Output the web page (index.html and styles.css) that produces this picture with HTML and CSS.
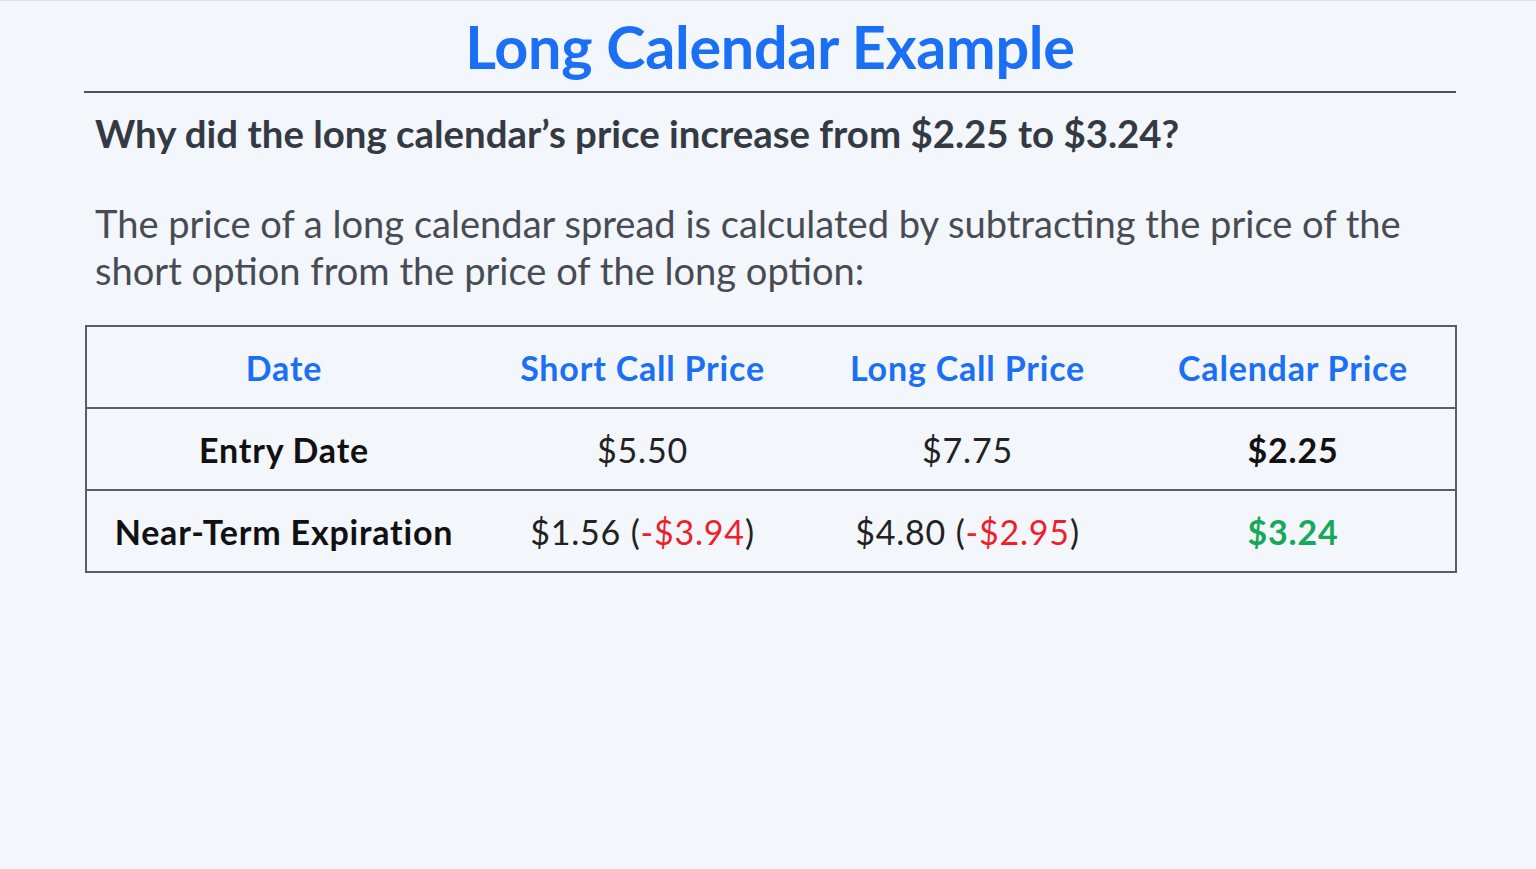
FILE: index.html
```html
<!DOCTYPE html>
<html lang="en">
<head>
<meta charset="utf-8">
<title>Long Calendar Example</title>
<link rel="stylesheet" href="styles.css">
</head>
<body>
<main class="slide">
  <h1 class="title">Long Calendar Example</h1>
  <hr class="rule">
  <h2 class="question">Why did the long calendar’s price increase from $2.25 to $3.24?</h2>
  <p class="body">The price of a long calendar spread is calculated by subtracting the price of the short option from the price of the long option:</p>
  <table class="prices">
    <colgroup>
      <col class="c1"><col class="c2"><col class="c3"><col class="c4">
    </colgroup>
    <thead>
      <tr>
        <th>Date</th>
        <th>Short Call Price</th>
        <th>Long Call Price</th>
        <th>Calendar Price</th>
      </tr>
    </thead>
    <tbody>
      <tr>
        <td class="label">Entry Date</td>
        <td>$5.50</td>
        <td>$7.75</td>
        <td class="strong">$2.25</td>
      </tr>
      <tr>
        <td class="label">Near-Term Expiration</td>
        <td>$1.56 (<span class="neg">-$3.94</span>)</td>
        <td>$4.80 (<span class="neg">-$2.95</span>)</td>
        <td class="strong pos">$3.24</td>
      </tr>
    </tbody>
  </table>
</main>
</body>
</html>
```

FILE: styles.css
```css
html, body {
  margin: 0;
  padding: 0;
  background: #f3f6fb;
}
body {
  width: 1536px;
  height: 869px;
  overflow: hidden;
  border-top: 1px solid #dfe3ea;
  box-sizing: border-box;
}
.slide {
  padding: 0 80px 0 84px;
  font-family: Lato, "Open Sans", sans-serif;
}
.title {
  margin: 0;
  padding-top: 12px;
  height: 78px;
  box-sizing: border-box;
  text-align: center;
  font-size: 59.3px;
  line-height: 66px;
  font-weight: 700;
  color: #1a6ff4;
  letter-spacing: -0.3px;
}
.rule {
  margin: 12px 0 0 0;
  border: 0;
  height: 2px;
  background: #4d5158;
}
.question {
  margin: 17px 0 0 11px;
  font-size: 38.4px;
  line-height: 46px;
  font-weight: 700;
  color: #343a44;
}
.body {
  margin: 44px 0 0 11px;
  font-size: 38.1px;
  line-height: 47px;
  font-weight: 400;
  color: #474c54;
  width: 1360px;
}
.prices {
  margin: 31px 0 0 1px;
  width: 1370px;
  border-collapse: collapse;
  border: 2px solid #5a5d63;
  table-layout: fixed;
  font-family: Lato, "Open Sans", sans-serif;
}
.c1 { width: 395px; }
.c2 { width: 323px; }
.c3 { width: 327px; }
.c4 { width: 325px; }
.prices th,
.prices td {
  height: 80px;
  padding: 0;
  text-align: center;
  vertical-align: middle;
  font-size: 34px;
  letter-spacing: 0.8px;
}
.prices th {
  color: #1a6ff4;
  font-weight: 700;
}
.prices tbody tr td {
  border-top: 2px solid #5a5d63;
}
.prices td {
  color: #222;
  font-weight: 400;
}
.prices td.label,
.prices td.strong {
  font-weight: 700;
  color: #111;
}
.prices td.pos {
  color: #17a85b;
}
.neg {
  color: #ee1f2a;
}
```
